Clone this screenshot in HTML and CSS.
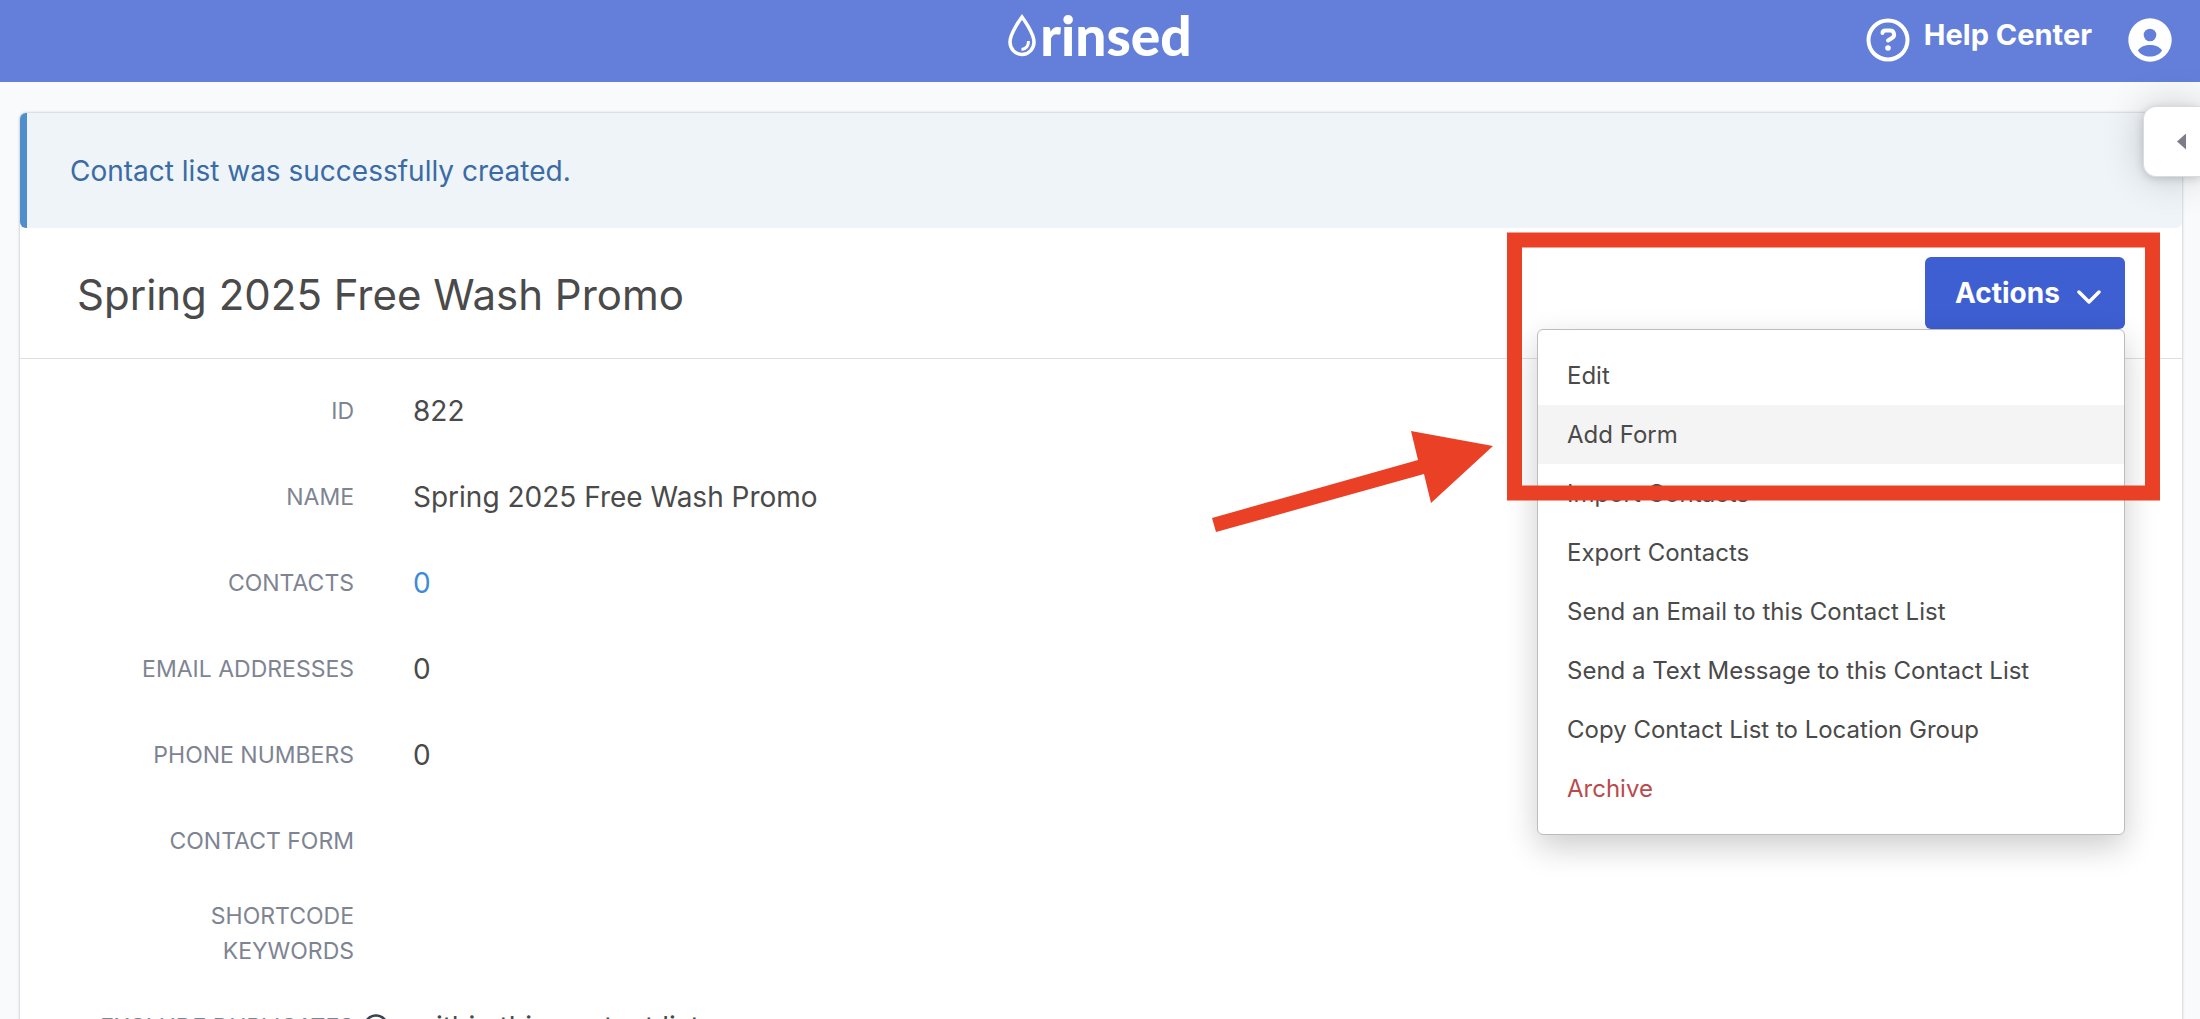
FILE: index.html
```html
<!DOCTYPE html>
<html lang="en">
<head>
    <meta charset="UTF-8">
    <meta name="viewport" content="width=device-width, initial-scale=1.0">
    <title>Spring 2025 Free Wash Promo | Rinsed</title>
    <link rel="stylesheet" href="styles.css">
</head>
<body>
    <header class="topbar">
        <a href="#" class="logo">
            <svg class="logo-drop" viewBox="0 0 28 43" aria-hidden="true">
                <path d="M14 3C14 3 2 19 2 28a12 12.500 0 0 0 24 0C26 19 14 3 14 3z" fill="none" stroke="#fff" stroke-width="3.500"/>
                <path d="M20.500 27c0 5-2.500 8-7 8.500" fill="none" stroke="#fff" stroke-width="3"/>
            </svg>
            <span>rinsed</span>
        </a>
        <nav class="topbar-nav">
            <a href="#" class="help-link">
                <svg class="nav-icon" viewBox="0 0 44 44" aria-hidden="true">
                    <circle cx="22" cy="22" r="19.500" fill="none" stroke="#fff" stroke-width="4"/>
                    <path d="M16.500 15c0-2 1.500-2.500 3-2.500h4.500a4 4 0 0 1 2 7.500L22 22.500" fill="none" stroke="#fff" stroke-width="4" stroke-linecap="round" stroke-linejoin="round"/>
                    <circle cx="22" cy="30" r="2.800" fill="#fff"/>
                </svg>
                <span>Help Center</span>
            </a>
            <a href="#" class="account-link" aria-label="Account">
                <svg class="nav-icon" viewBox="0 0 44 44" aria-hidden="true">
                    <circle cx="22" cy="22" r="21.700" fill="#fff"/>
                    <circle cx="22" cy="17" r="6.300" fill="#637fda"/>
                    <path d="M10 32.500c2.500-4 7-5.500 12-5.500s9.500 1.500 12 5.500c-2.500 4-7 6-12 6s-9.500-2-12-6z" fill="#637fda"/>
                </svg>
            </a>
        </nav>
    </header>

    <button class="side-tab" aria-label="Open panel"></button>

    <main class="card">
        <div class="alert">Contact list was successfully created.</div>

        <div class="card-header">
            <h1>Spring 2025 Free Wash Promo</h1>
            <div class="actions">
                <button class="actions-button">
                    Actions
                    <svg class="chevron" viewBox="0 0 24 14" aria-hidden="true">
                        <path d="M2 2l10 10L22 2" fill="none" stroke="#fff" stroke-width="3.500" stroke-linecap="round" stroke-linejoin="round"/>
                    </svg>
                </button>
                <div class="menu">
                    <a href="#">Edit</a>
                    <a href="#" class="current">Add Form</a>
                    <a href="#">Import Contacts</a>
                    <a href="#">Export Contacts</a>
                    <a href="#">Send an Email to this Contact List</a>
                    <a href="#">Send a Text Message to this Contact List</a>
                    <a href="#">Copy Contact List to Location Group</a>
                    <a href="#" class="danger">Archive</a>
                </div>
                <svg class="callout" viewBox="0 0 948 301" aria-hidden="true">
                    <rect x="302.500" y="8" width="638" height="253" fill="none" stroke="#ea4126" stroke-width="15"/>
                    <path d="M0 286l206-58-7-29 82 15-62 57-7-29-208 58z" fill="#ea4126"/>
                </svg>
            </div>
        </div>

        <dl class="details">
            <div class="row">
                <dt>ID</dt>
                <dd>822</dd>
            </div>
            <div class="row">
                <dt>Name</dt>
                <dd>Spring 2025 Free Wash Promo</dd>
            </div>
            <div class="row">
                <dt>Contacts</dt>
                <dd><a href="#">0</a></dd>
            </div>
            <div class="row">
                <dt>Email Addresses</dt>
                <dd>0</dd>
            </div>
            <div class="row">
                <dt>Phone Numbers</dt>
                <dd>0</dd>
            </div>
            <div class="row">
                <dt>Contact Form</dt>
                <dd></dd>
            </div>
            <div class="row">
                <dt>Shortcode<br>Keywords</dt>
                <dd></dd>
            </div>
            <div class="row">
                <dt>Exclude Duplicates
                    <svg class="hint" viewBox="0 0 26 26" aria-hidden="true">
                        <circle cx="13" cy="13" r="11.500" fill="none" stroke="#3d4152" stroke-width="2.500"/>
                        <path d="M13 12v7M13 7v2" stroke="#3d4152" stroke-width="2.500"/>
                    </svg>
                </dt>
                <dd>within this contact list</dd>
            </div>
        </dl>
    </main>
</body>
</html>
```
FILE: styles.css
```css
* {
    box-sizing: border-box;
}

body {
    height: 100vh;
    margin: 0;
    overflow: hidden;
    font-family: Inter, "Liberation Sans", sans-serif;
    font-size: 28px;
    line-height: 42px;
    color: #4a4a4a;
    background-color: #f9fafc;
}

a {
    color: #3d8bd9;
    text-decoration: none;
}

.topbar {
    display: grid;
    grid-template-columns: 1fr auto 1fr;
    height: 82px;
    padding: 0 28px;
    background-color: #637fda;
}

.topbar a {
    color: white;
    font-weight: 700;
}

.logo {
    grid-column: 2;
    display: flex;
    gap: 4px;
    padding-top: 14px;
    font-family: Lato, sans-serif;
    font-size: 55px;
}

.topbar .logo {
    font-weight: 900;
}

.logo-drop {
    width: 28px;
    height: 43px;
}

.topbar-nav {
    display: flex;
    justify-content: flex-end;
    gap: 36px;
    padding-top: 18px;
}

.help-link {
    display: flex;
    gap: 14px;
    font-size: 29px;
    line-height: 34px;
}

.nav-icon {
    display: block;
    width: 44px;
    height: 44px;
}

.side-tab {
    position: absolute;
    top: 106px;
    right: 0;
    z-index: 2;
    width: 57px;
    height: 71px;
    padding: 0 0 0 33px;
    border: 1px solid #d9dbe0;
    border-right: 0;
    border-radius: 13px 0 0 13px;
    background-color: white;
    box-shadow: 0 0 40px rgba(0, 0, 0, 0.2), 0 2px 8px rgba(0, 0, 0, 0.15);
}

.side-tab::before {
    content: "";
    display: block;
    width: 9px;
    height: 16px;
    background-color: #7d7d87;
    clip-path: polygon(100% 0, 100% 100%, 0 50%);
}

.card {
    margin: 31px 18px 0 20px;
    border-radius: 6px;
    background-color: white;
    box-shadow: 0 0 3px rgba(0, 0, 0, 0.3);
}

.alert {
    padding: 37px 43px 36px;
    border-left: 7px solid #508dcb;
    border-radius: 6px;
    color: #3a6ba5;
    background-color: #eef4f8;
}

.card-header {
    display: flex;
    justify-content: space-between;
    align-items: center;
    height: 131px;
    padding: 0 57px;
    border-bottom: 1px solid #dedede;
}

h1 {
    margin: 0;
    padding-top: 4px;
    font-size: 42px;
    font-weight: 400;
    line-height: 60px;
}

.actions {
    position: relative;
}

.actions-button {
    display: flex;
    align-items: center;
    justify-content: space-between;
    width: 200px;
    height: 72px;
    padding: 0 24px 0 30px;
    border: 0;
    border-radius: 6px;
    font: inherit;
    font-weight: 700;
    color: white;
    background-color: #3e5fd2;
}

.chevron {
    width: 24px;
    height: 14px;
    margin-top: 8px;
}

.menu {
    position: absolute;
    top: 100%;
    right: 0;
    width: 588px;
    padding: 16px 0;
    border: 1px solid #bcbcbc;
    border-radius: 6px;
    background-color: white;
    box-shadow: 0 12px 32px rgba(0, 0, 0, 0.2);
}

.menu a {
    display: block;
    padding: 0 29px;
    font-size: 24px;
    line-height: 59px;
    color: #4a4a4a;
}

.menu .current {
    background-color: #f4f4f4;
}

.menu .danger {
    color: #bb4a4d;
}

/* arrow and frame drawn over the menu */
.callout {
    position: absolute;
    top: -25px;
    right: -35px;
    width: 948px;
    height: 301px;
    pointer-events: none;
}

.details {
    margin: 0;
    padding: 9px 57px;
}

.row {
    display: grid;
    grid-template-columns: 277px 1fr;
    gap: 59px;
    align-items: center;
    min-height: 86px;
    padding: 15px 0;
}

dt {
    position: relative;
    font-size: 23px;
    line-height: 35px;
    text-align: right;
    text-transform: uppercase;
    color: #7e8492;
}

dd {
    margin: 0;
}

.hint {
    position: absolute;
    top: 4px;
    right: -35px;
    width: 26px;
    height: 26px;
}
```
